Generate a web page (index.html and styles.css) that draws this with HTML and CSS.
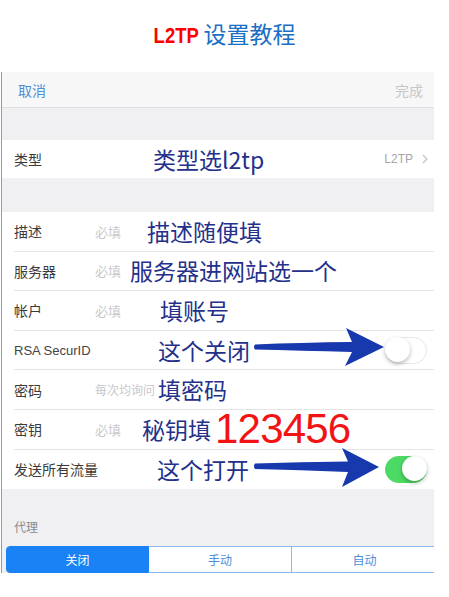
FILE: index.html
```html
<!DOCTYPE html>
<html lang="zh-CN">
<head>
  <meta charset="UTF-8">
  <meta name="viewport" content="width=device-width, initial-scale=1.0">
  <title>L2TP 设置教程</title>
  <link rel="stylesheet" href="styles.css">
</head>
<body>
  <h1 class="title"><span class="title-en">L2TP</span> <span class="title-cn">设置教程</span></h1>

  <div class="panel">
    <!-- top bar -->
    <div class="nav">
      <span class="nav-cancel">取消</span>
      <span class="nav-done">完成</span>
    </div>

    <div class="gap gap-top"></div>

    <div class="group">
      <div class="row row-type">
        <span class="label">类型</span>
        <span class="note note-type">类型选l2tp</span>
        <span class="value">L2TP
          <svg class="chevron" width="6" height="10" viewBox="0 0 6 10"><path d="M1 1l4 4-4 4" fill="none" stroke="#c4c4c8" stroke-width="1.2"/></svg>
        </span>
      </div>
    </div>

    <div class="gap gap-mid"></div>

    <div class="group">
      <div class="row">
        <span class="label">描述</span>
        <span class="ph">必填</span>
        <span class="note note-desc">描述随便填</span>
      </div>
      <div class="row">
        <span class="label">服务器</span>
        <span class="ph">必填</span>
        <span class="note note-server">服务器进网站选一个</span>
      </div>
      <div class="row">
        <span class="label">帐户</span>
        <span class="ph">必填</span>
        <span class="note note-account">填账号</span>
      </div>
      <div class="row">
        <span class="label label-latin">RSA SecurID</span>
        <span class="note note-rsa">这个关闭</span>
        <span class="switch"></span>
      </div>
      <div class="row">
        <span class="label">密码</span>
        <span class="ph ph-small">每次均询问</span>
        <span class="note note-pass">填密码</span>
      </div>
      <div class="row">
        <span class="label">密钥</span>
        <span class="ph">必填</span>
        <span class="note note-key">秘钥填</span>
        <span class="big-red">123456</span>
      </div>
      <div class="row">
        <span class="label">发送所有流量</span>
        <span class="note note-send">这个打开</span>
        <span class="switch switch-on"></span>
      </div>
    </div>

    <div class="section-head">代理</div>

    <div class="segmented">
      <span class="seg seg-on">关闭</span>
      <span class="seg">手动</span>
      <span class="seg">自动</span>
    </div>

    <!-- hand drawn arrows pointing at the switches -->
    <svg class="arrows" width="432" height="501" viewBox="2 72 432 501">
      <path d="M255 344.5 Q300 342.5 352 342 L346 328 L384 347 L345 366 L352 352 Q300 350.5 255 349.5 Q253 347 255 344.5Z" fill="#1838ad"/>
      <path d="M255 463.5 Q300 462 348 461.5 L342 448 L379 467 L342 487 L348 472 Q300 470 255 469 Q253 466 255 463.5Z" fill="#1838ad"/>
    </svg>
  </div>
</body>
</html>
```

FILE: styles.css
```css
body {
  margin: 0;
  background: #fff;
  font-family: "Noto Sans CJK SC", sans-serif;
}
.title {
  margin: 0;
  height: 72px;
  padding-top: 19px;
  box-sizing: border-box;
  text-align: center;
  font-size: 23px;
  line-height: 28px;
  font-weight: normal;
}
.title-en {
  display: inline-block;
  margin-left: -9px;
  transform: scaleX(0.84);
  transform-origin: right center;
  font-family: "Liberation Sans", sans-serif;
  font-weight: bold;
  font-size: 22px;
  color: #ff0000;
}
.title-cn {
  color: #1b6fc4;
}

.panel {
  position: relative;
  margin-left: 1px;
  width: 433px;
  height: 501px;
  border-left: 1px solid #9a9a9a;
  box-sizing: border-box;
  background: #f0f0f2;
  overflow: hidden;
}
.nav {
  display: flex;
  justify-content: space-between;
  align-items: center;
  height: 36px;
  padding: 0 11px 0 16px;
  background: #f7f7f8;
  border-bottom: 1px solid #dedee0;
  box-sizing: border-box;
  font-size: 14px;
}
.nav-cancel {
  color: #4d8fd8;
}
.nav-done {
  color: #c6c6c8;
}
.gap-top {
  height: 32px;
}
.gap-mid {
  height: 34px;
}
.group {
  background: #fff;
}
.row {
  display: flex;
  align-items: center;
  height: 39.6px;
  margin-left: 12px;
  padding-right: 7px;
  border-bottom: 1px solid #e4e4e7;
  box-sizing: border-box;
  white-space: nowrap;
}
.row:last-child {
  border-bottom: none;
}
.row-type {
  height: 38px;
  padding-right: 6px;
}
.label {
  flex: none;
  width: 81px;
  font-size: 14px;
  color: #3a3a3a;
}
.label-latin {
  font-family: "Liberation Sans", sans-serif;
  font-size: 13px;
  color: #444;
}
.ph {
  font-size: 13px;
  color: #c8c8cc;
}
.ph-small {
  font-size: 12px;
}
.note {
  font-size: 23px;
  line-height: 1;
  color: #24308a;
}
.note-type { margin-left: 58px; }
.note-desc { margin-left: 26px; }
.note-server { margin-left: 9px; }
.note-account { margin-left: 39px; }
.note-rsa { margin-left: 63px; }
.note-pass { margin-left: 3px; }
.note-key { margin-left: 21px; }
.note-send { margin-left: 62px; }
.big-red {
  margin-left: 4px;
  font-family: "Liberation Sans", sans-serif;
  font-size: 42px;
  line-height: 1;
  letter-spacing: -0.8px;
  color: #f21414;
}
.value {
  margin-left: auto;
  display: flex;
  align-items: center;
  gap: 9px;
  font-family: "Liberation Sans", sans-serif;
  font-size: 12px;
  color: #a6a6a8;
}
.switch {
  position: relative;
  margin-left: auto;
  width: 42px;
  height: 27px;
  border-radius: 14px;
  border: 1.5px solid #e6e6e8;
  box-sizing: border-box;
  background: #fff;
}
.switch::after {
  content: "";
  position: absolute;
  left: -1px;
  top: -0.5px;
  width: 25px;
  height: 25px;
  border-radius: 50%;
  background: #fff;
  box-shadow: 0 2px 4px rgba(0, 0, 0, 0.28);
}
.switch-on {
  background: #4cd964;
  border-color: #4cd964;
}
.switch-on::after {
  left: auto;
  right: -1px;
}
.section-head {
  height: 57px;
  padding: 30px 0 0 12px;
  box-sizing: border-box;
  font-size: 12px;
  line-height: 16px;
  color: #8a8a8e;
}
.segmented {
  display: grid;
  grid-template-columns: 143px 143px 146px;
  margin-left: 4px;
  height: 27px;
  width: 432px;
}
.seg {
  display: flex;
  align-items: center;
  justify-content: center;
  border: 1px solid #8cb9e8;
  border-left: none;
  background: #fff;
  font-size: 12px;
  color: #4d8fd8;
}
.seg-on {
  border: 1px solid #1a82f5;
  border-radius: 4px 0 0 4px;
  background: #1a82f5;
  color: #fff;
}
.arrows {
  position: absolute;
  left: 0;
  top: 0;
  pointer-events: none;
}
```
